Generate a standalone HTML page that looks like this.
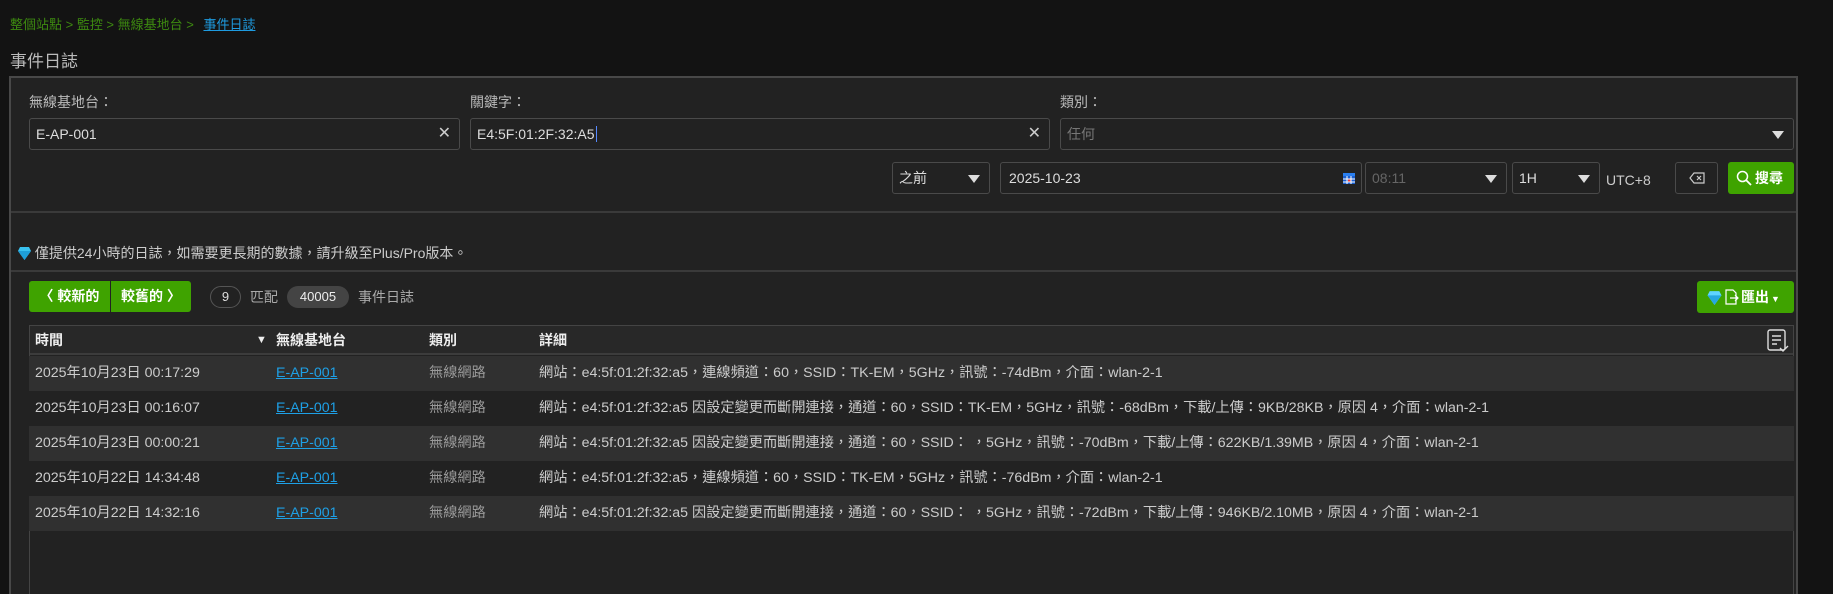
<!DOCTYPE html>
<html style="overflow:hidden;height:594px"><head><meta charset="utf-8">
<style>
*{box-sizing:border-box;margin:0;padding:0}
body{width:1833px;height:594px;background:#131313;font-family:"Liberation Sans","Noto Sans CJK TC",sans-serif;color:#ccc;position:relative;overflow:hidden;font-size:14px}
.a{position:absolute}
.bc{left:10px;top:14px;font-size:13px;color:#3d8a10}
.bc a{color:#1e9be0;text-decoration:underline;margin-left:6px}
.title{left:10px;top:47px;font-size:17px;color:#bbb}
.panel{left:9px;top:76px;width:1789px;height:518px;background:#222;border:2px solid #484848;border-bottom:none}
.lbl{font-size:14px;color:#bbb}
.inp{border:1px solid #4a4a4a;border-radius:3px;background:#222;height:32px;color:#ddd;font-size:14px;padding-left:6px;line-height:30px}
.x{position:absolute;right:8px;top:0;font-size:16px;color:#ccc}
.tri{position:absolute;right:9px;top:12px;width:0;height:0;border-left:6px solid transparent;border-right:6px solid transparent;border-top:8px solid #ddd}
.hr{height:2px;background:#3a3a3a;left:11px;width:1785px}
.gbtn{background:#3fa300;color:#fff;font-weight:bold;border-radius:3px;font-size:14px;text-align:center}
.row{left:29px;width:1765px;height:35px;line-height:35px;font-size:14.2px;color:#ccc}
.row span{position:absolute}
.row .ap{left:247px;color:#1ea0e6;text-decoration:underline}
.row .cat{left:400px;color:#999}
.row .d{left:510px}
.row .t{left:6px}
</style></head><body>
<div class="a bc">整個站點 &gt; 監控 &gt; 無線基地台 &gt; <a>事件日誌</a></div>
<div class="a title">事件日誌</div>
<div class="a panel"></div>

<div class="a lbl" style="left:29px;top:92px">無線基地台：</div>
<div class="a lbl" style="left:470px;top:92px">關鍵字：</div>
<div class="a lbl" style="left:1060px;top:92px">類別：</div>
<div class="a inp" style="left:29px;top:118px;width:431px">E-AP-001<span class="x">✕</span></div>
<div class="a inp" style="left:470px;top:118px;width:580px">E4:5F:01:2F:32:A5<span style="border-left:1px solid #58f;margin-left:1px"></span><span class="x">✕</span></div>
<div class="a inp" style="left:1060px;top:118px;width:734px;color:#777">任何<span class="tri"></span></div>

<div class="a inp" style="left:892px;top:162px;width:98px">之前<span class="tri"></span></div>
<div class="a inp" style="left:1000px;top:162px;width:362px;padding-left:8px">2025-10-23
<svg style="position:absolute;right:5px;top:8px" width="14" height="14" viewBox="0 0 14 14"><rect x="1" y="2" width="12" height="11" fill="#1a5fd0"/><rect x="1" y="2" width="12" height="3" fill="#2a7ff0"/><g stroke="#fff" stroke-width="1"><line x1="1" y1="8" x2="13" y2="8"/><line x1="1" y1="11" x2="13" y2="11"/><line x1="5" y1="5" x2="5" y2="13"/><line x1="9" y1="5" x2="9" y2="13"/></g><rect x="6" y="8.5" width="2.5" height="2" fill="#e33"/></svg></div>
<div class="a inp" style="left:1365px;top:162px;width:142px;color:#666">08:11<span class="tri"></span></div>
<div class="a inp" style="left:1512px;top:162px;width:88px">1H<span class="tri"></span></div>
<div class="a" style="left:1606px;top:172px;font-size:14px;color:#ccc">UTC+8</div>
<div class="a" style="left:1675px;top:162px;width:43px;height:32px;border:1px solid #4a4a4a;border-radius:3px">
<svg style="position:absolute;left:13px;top:9px" width="16" height="12" viewBox="0 0 16 12"><path d="M5 1H15V11H5L1 6Z" fill="none" stroke="#ccc" stroke-width="1.2"/><path d="M8 4L12 8M12 4L8 8" stroke="#ccc" stroke-width="1.2"/></svg></div>
<div class="a gbtn" style="left:1728px;top:162px;width:66px;height:32px;line-height:32px;padding-left:16px">搜尋
<svg style="position:absolute;left:8px;top:8px" width="16" height="16" viewBox="0 0 16 16"><circle cx="6.5" cy="6.5" r="5" fill="none" stroke="#fff" stroke-width="1.5"/><line x1="10" y1="10" x2="15" y2="15" stroke="#fff" stroke-width="1.8"/></svg></div>

<div class="a hr" style="top:211px"></div>
<div class="a" style="left:18px;top:243px;font-size:14px;color:#ccc">
<svg width="13" height="14" viewBox="0 0 13 14" style="vertical-align:-2px"><path d="M2 1H11L13 5L6.5 14L0 5Z" fill="#39c2f0"/><path d="M0 5H13L6.5 14Z" fill="#1e9fd8"/></svg> 僅提供24小時的日誌，如需要更長期的數據，請升級至Plus/Pro版本。</div>
<div class="a hr" style="top:270px"></div>

<div class="a gbtn" style="left:29px;top:281px;width:81px;height:31px;line-height:31px;border-radius:3px 0 0 3px">〈 較新的</div>
<div class="a gbtn" style="left:111px;top:281px;width:80px;height:31px;line-height:31px;border-radius:0 3px 3px 0">較舊的 〉</div>
<div class="a" style="left:210px;top:286px;width:31px;height:22px;border:1px solid #555;border-radius:11px;text-align:center;line-height:20px;font-size:13px;color:#ddd">9</div>
<div class="a" style="left:250px;top:287px;color:#aaa">匹配</div>
<div class="a" style="left:287px;top:286px;width:62px;height:22px;background:#444;border-radius:11px;text-align:center;line-height:22px;font-size:13px;color:#eee">40005</div>
<div class="a" style="left:358px;top:287px;color:#aaa">事件日誌</div>
<div class="a gbtn" style="left:1697px;top:281px;width:97px;height:32px;line-height:32px;padding-left:28px;text-align:left">
<svg style="position:absolute;left:10px;top:9px" width="15" height="15" viewBox="0 0 13 14"><path d="M2 1H11L13 5L6.5 14L0 5Z" fill="#5fd4ff"/><path d="M0 5H13L6.5 14Z" fill="#27a8e0"/></svg>
<svg style="position:absolute;left:28px;top:8px" width="14" height="16" viewBox="0 0 14 16"><path d="M1 1H8L11 4V15H1Z" fill="none" stroke="#fff" stroke-width="1.2"/><path d="M5 9H13M10 6L13 9L10 12" fill="none" stroke="#fff" stroke-width="1.2"/></svg>
<span style="margin-left:16px">匯出</span><span style="font-size:9px;margin-left:2px">▼</span></div>

<div class="a" style="left:29px;top:325px;width:1765px;height:269px;background:#222;border:1px solid #444;border-bottom:none"></div>
<div class="a" style="left:30px;top:326px;width:1763px;height:29px;background:#282828;border-bottom:2px solid #3c3c3c;font-weight:bold;color:#eee;line-height:28px">
<span class="a" style="left:5px">時間</span>
<span class="a" style="left:226px;font-size:11px">▼</span>
<span class="a" style="left:246px">無線基地台</span>
<span class="a" style="left:399px">類別</span>
<span class="a" style="left:509px">詳細</span>
<svg class="a" style="right:4px;top:3px" width="22" height="24" viewBox="0 0 22 24"><rect x="1" y="1" width="17" height="20" rx="2" fill="none" stroke="#ddd" stroke-width="1.4"/><path d="M5 7H14M5 11H14M5 15H10" stroke="#ddd" stroke-width="1.4"/><path d="M13 19L16 22L21 17" fill="none" stroke="#ddd" stroke-width="1.4"/></svg>
</div>
<div class="a row" style="top:356px;background:#303030"><span class="t">2025年10月23日 00:17:29</span><span class="ap">E-AP-001</span><span class="cat">無線網路</span><span class="d">網站：e4:5f:01:2f:32:a5，連線頻道：60，SSID：TK-EM，5GHz，訊號：-74dBm，介面：wlan-2-1</span></div>
<div class="a row" style="top:391px;background:#222"><span class="t">2025年10月23日 00:16:07</span><span class="ap">E-AP-001</span><span class="cat">無線網路</span><span class="d">網站：e4:5f:01:2f:32:a5 因設定變更而斷開連接，通道：60，SSID：TK-EM，5GHz，訊號：-68dBm，下載/上傳：9KB/28KB，原因 4，介面：wlan-2-1</span></div>
<div class="a row" style="top:426px;background:#303030"><span class="t">2025年10月23日 00:00:21</span><span class="ap">E-AP-001</span><span class="cat">無線網路</span><span class="d">網站：e4:5f:01:2f:32:a5 因設定變更而斷開連接，通道：60，SSID： ，5GHz，訊號：-70dBm，下載/上傳：622KB/1.39MB，原因 4，介面：wlan-2-1</span></div>
<div class="a row" style="top:461px;background:#222"><span class="t">2025年10月22日 14:34:48</span><span class="ap">E-AP-001</span><span class="cat">無線網路</span><span class="d">網站：e4:5f:01:2f:32:a5，連線頻道：60，SSID：TK-EM，5GHz，訊號：-76dBm，介面：wlan-2-1</span></div>
<div class="a row" style="top:496px;background:#303030"><span class="t">2025年10月22日 14:32:16</span><span class="ap">E-AP-001</span><span class="cat">無線網路</span><span class="d">網站：e4:5f:01:2f:32:a5 因設定變更而斷開連接，通道：60，SSID： ，5GHz，訊號：-72dBm，下載/上傳：946KB/2.10MB，原因 4，介面：wlan-2-1</span></div>
</body></html>
